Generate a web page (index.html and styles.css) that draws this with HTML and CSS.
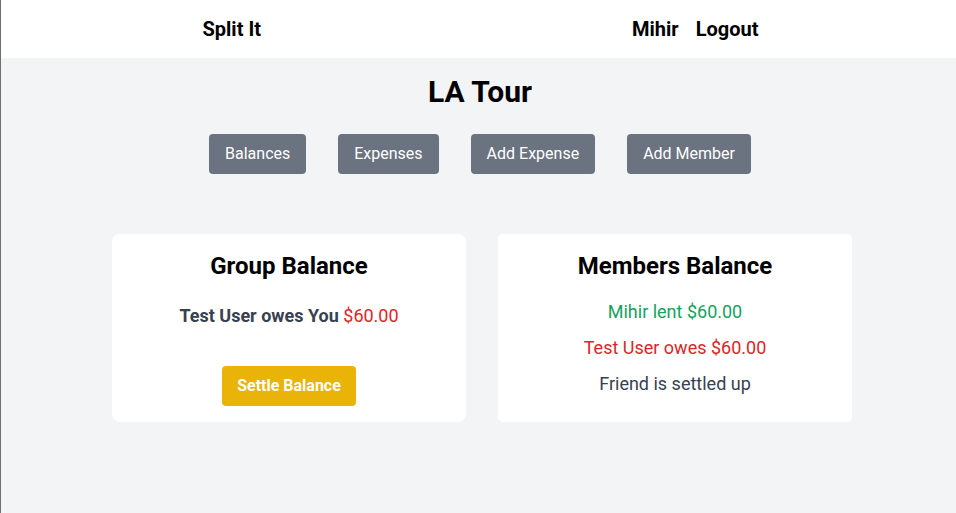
FILE: index.html
```html
<!DOCTYPE html>
<html lang="en">
<head>
<meta charset="utf-8">
<title>Split It</title>
<link rel="stylesheet" href="styles.css">
</head>
<body>
<header class="topbar">
  <div class="brand">Split It</div>
  <nav class="nav">
    <span class="nav-item">Mihir</span>
    <span class="nav-item">Logout</span>
  </nav>
</header>
<main class="main">
  <h1 class="group-title">LA Tour</h1>
  <div class="tabs">
    <button class="tab">Balances</button>
    <button class="tab">Expenses</button>
    <button class="tab">Add Expense</button>
    <button class="tab">Add Member</button>
  </div>
  <div class="cards">
    <section class="card card-left">
      <h2 class="card-title">Group Balance</h2>
      <p class="owe-line"><strong class="owe-who">Test User owes You</strong> <span class="red">$60.00</span></p>
      <button class="settle">Settle Balance</button>
    </section>
    <section class="card card-right">
      <h2 class="card-title tight">Members Balance</h2>
      <ul class="members">
        <li class="green">Mihir lent $60.00</li>
        <li class="red">Test User owes $60.00</li>
        <li class="gray">Friend is settled up</li>
      </ul>
    </section>
  </div>
</main>
</body>
</html>
```
FILE: styles.css
```css
* { box-sizing: border-box; }
html, body { height: 100%; }
body {
  margin: 0;
  background: #f3f4f6;
  border-left: 1px solid #6f6f6f;
  font-family: Roboto, "Liberation Sans", Arial, sans-serif;
  color: #000;
}
.topbar {
  height: 58px;
  background: #fff;
  display: flex;
  align-items: center;
  justify-content: space-around;
  padding: 0 12px 0 16px;
}
.brand, .nav-item {
  font-size: 20px;
  font-weight: 700;
  line-height: 28px;
}
.nav { display: flex; gap: 17px; }
.main { padding-left: 3px; }
.group-title {
  margin: 16px 0 0;
  text-align: center;
  font-size: 30px;
  line-height: 36px;
  font-weight: 700;
}
.tabs {
  display: flex;
  justify-content: center;
  gap: 32px;
  margin-top: 24px;
}
.tab {
  font-family: inherit;
  font-size: 16px;
  line-height: 24px;
  padding: 8px 16px;
  color: #fff;
  background: #6b7280;
  border: 0;
  border-radius: 4px;
}
.cards {
  display: grid;
  grid-template-columns: 354px 354px;
  gap: 32px;
  width: 740px;
  margin: 60px 0 0 calc(50% - 368px);
}
.card {
  background: #fff;
  border-radius: 8px;
  padding: 16px;
  text-align: center;
}
.card-right { border-radius: 5px; }
.card-title {
  margin: 0 0 20px;
  font-size: 24px;
  line-height: 32px;
  font-weight: 700;
}
.card-title.tight { margin-bottom: 16px; }
.owe-line {
  margin: 0;
  font-size: 18px;
  line-height: 28px;
}
.owe-who { color: #374151; font-weight: 700; }
.red { color: #dc2626; }
.green { color: #17a15e; }
.gray { color: #374151; }
.settle {
  margin-top: 36px;
  font-family: inherit;
  font-size: 16px;
  font-weight: 700;
  line-height: 24px;
  padding: 8px 15px;
  color: #fff;
  background: #eab308;
  border: 0;
  border-radius: 4px;
}
.members {
  list-style: none;
  margin: 0;
  padding: 0;
  display: flex;
  flex-direction: column;
  gap: 8px;
  font-size: 18px;
  line-height: 28px;
}
```
